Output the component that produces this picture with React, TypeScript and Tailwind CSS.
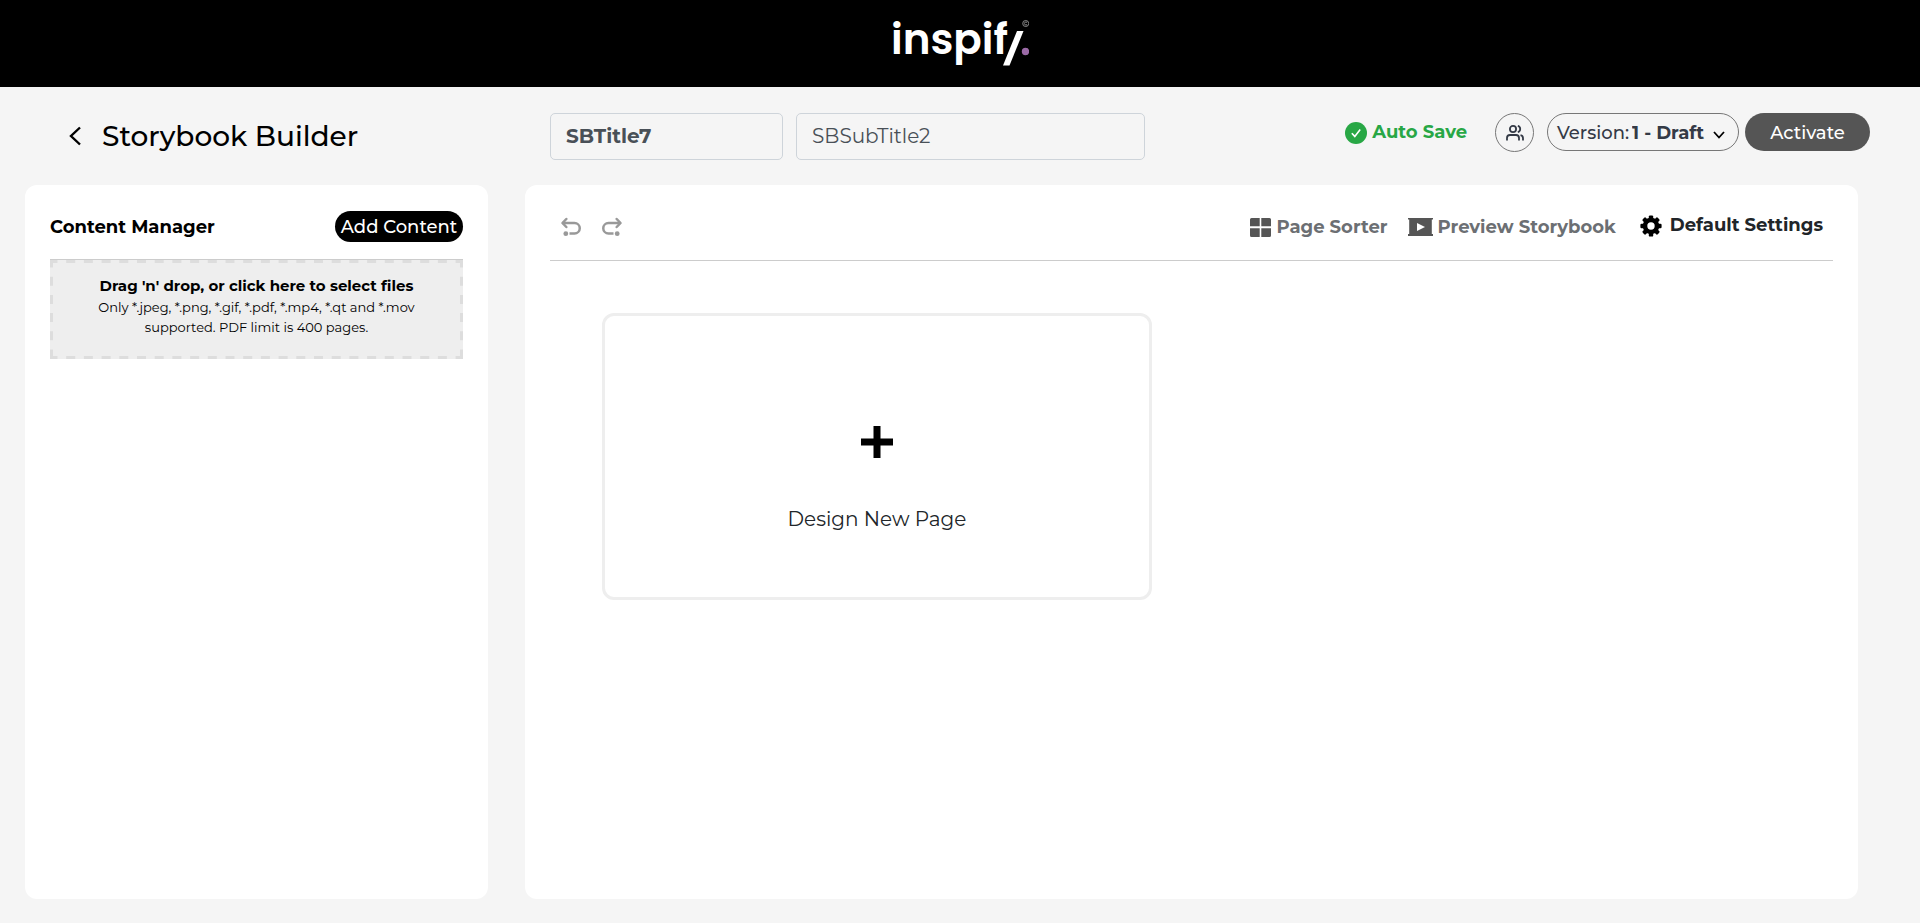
import React from "react";

function Logo() {
  return (
    <a href="#home" aria-label="inspify" className="flex h-12 items-start text-white">
      <span className="font-['Poppins','Lato',sans-serif] text-[42px] leading-[44px] font-semibold">inspif</span>
      <svg viewBox="0 0 28 48" className="-ml-[7px] h-12 w-7" aria-hidden="true">
        <path d="M16 13H22.500L8.500 47.500H2Z" fill="#fff" />
        <circle cx="24.500" cy="33.500" r="3.700" fill="#9b6aa6" />
        <circle cx="24.700" cy="5.500" r="3" fill="none" stroke="#8a8a8a" />
        <path d="M26 4.500a1.500 1.500 0 1 0 0 2" fill="none" stroke="#8a8a8a" />
      </svg>
    </a>
  );
}

function UndoIcon({ flipped = false }: { flipped?: boolean }) {
  return (
    <svg
      viewBox="0 0 20 20"
      className={flipped ? "h-5 w-5 -scale-x-100" : "h-5 w-5"}
      fill="none"
      stroke="#999"
      strokeWidth="2.500"
      aria-hidden="true"
    >
      <path d="M1.500 6H13.500a5.200 5.200 0 0 1 0 10.500H8.500" />
      <path d="M5.300 2 1.500 6l3.800 4" strokeLinecap="round" strokeLinejoin="round" />
      <circle cx="4.800" cy="16.700" r="2.400" fill="#999" stroke="none" />
    </svg>
  );
}

function Gear() {
  const teeth = [0, 45, 90, 135, 180, 225, 270, 315];
  return (
    <svg viewBox="0 0 22 22" className="h-[22px] w-[22px]" aria-hidden="true">
      <circle cx="11" cy="11" r="6" fill="none" stroke="#000" strokeWidth="4.600" />
      {teeth.map((a) => (
        <rect key={a} x="8.800" y="0.400" width="4.400" height="4" rx="1.200" transform={`rotate(${a} 11 11)`} />
      ))}
    </svg>
  );
}

function TitleBar() {
  return (
    <div className="flex items-start pt-[26px] pr-[50px] pb-[25px]">
      <div className="flex h-[47px] w-[550px] shrink-0 items-center gap-[21px] pb-0.5 pl-[69px]">
        <a href="#back" aria-label="Back">
          <svg viewBox="0 0 12 20" className="h-5 w-3" fill="none" stroke="#000" strokeWidth="2.400" aria-hidden="true">
            <path d="M11 1.500 2 10l9 8.500" />
          </svg>
        </a>
        <h1 className="text-[28px] leading-9 font-medium text-black">Storybook Builder</h1>
      </div>
      <div className="flex gap-[13px]">
        <input
          aria-label="Title"
          defaultValue="SBTitle7"
          className="h-[47px] w-[233px] rounded-[5px] border border-[#ced4da] bg-transparent px-[15px] pb-0.5 text-[20px] font-bold text-[#495057]"
        />
        <input
          aria-label="Subtitle"
          defaultValue="SBSubTitle2"
          className="h-[47px] w-[349px] rounded-[5px] border border-[#ced4da] bg-transparent px-[15px] pb-0.5 text-[20px] text-[#495057]"
        />
      </div>
      <div className="ml-auto flex items-start">
        <div className="mr-7 flex h-[39px] items-center gap-[5px] text-[18px] font-bold text-[#28a745]">
          <svg viewBox="0 0 22 22" className="h-[22px] w-[22px]" aria-hidden="true">
            <circle cx="11" cy="11" r="11" fill="#28a745" />
            <path d="m6.800 11.200 3 3.200 5.400-7" fill="none" stroke="#fff" strokeWidth="1.600" />
          </svg>
          Auto Save
        </div>
        <button
          aria-label="Collaborators"
          className="mr-[13px] flex h-[39px] w-[39px] items-center justify-center rounded-full border border-[#777]"
        >
          <svg viewBox="0 0 18 16" className="h-4 w-[18px]" fill="none" stroke="#343a46" strokeWidth="1.800" aria-hidden="true">
            <circle cx="7" cy="4" r="3.100" />
            <path d="M1 15.500V13a3 3 0 0 1 3-3h6a3 3 0 0 1 3 3v2.500M11.800.9a3.200 3.200 0 0 1 0 6.200M14.500 10.200a3 3 0 0 1 2.500 3v2.300" />
          </svg>
        </button>
        <label className="relative mr-[6px] flex h-[38px] w-[192px] items-center gap-[3px] rounded-full border border-[#777] pt-0.5 pl-[9px] text-[18px] font-medium text-[#343a46]">
          Version:
          <select className="flex-1 appearance-none bg-transparent text-[18px] font-bold outline-none">
            <option>1 - Draft</option>
          </select>
          <svg
            viewBox="0 0 12 8"
            className="pointer-events-none absolute top-[17px] right-[13px] h-2 w-3"
            fill="none"
            stroke="#000"
            strokeWidth="1.800"
            aria-hidden="true"
          >
            <path d="m1 1 5 5.500L11 1" />
          </svg>
        </label>
        <button className="h-[38px] w-[125px] rounded-full bg-[#555] pt-0.5 text-[18px] font-medium text-white">
          Activate
        </button>
      </div>
    </div>
  );
}

function DashedFrame() {
  return (
    <svg className="pointer-events-none absolute inset-0 h-full w-full" stroke="#ddd" strokeWidth="6" aria-hidden="true">
      <line x1="0" y1="0" x2="100%" y2="0" strokeDasharray="9 8.700" strokeDashoffset="1.500" />
      <line x1="0" y1="100%" x2="100%" y2="100%" strokeDasharray="9 8.700" strokeDashoffset="1.500" />
      <line x1="0" y1="0" x2="0" y2="100%" strokeDasharray="9 9.200" strokeDashoffset="1.500" />
      <line x1="100%" y1="0" x2="100%" y2="100%" strokeDasharray="9 9.200" strokeDashoffset="1.500" />
    </svg>
  );
}

function ContentManager() {
  return (
    <aside className="w-[463px] shrink-0 rounded-xl bg-white px-[25px] pt-[26px]">
      <div className="flex h-[31px] items-center justify-between">
        <h2 className="pt-0.5 text-[18px] font-bold text-black">Content Manager</h2>
        <button className="h-[31px] w-[128px] rounded-full bg-black pt-0.5 text-[18px] font-medium whitespace-nowrap text-white">
          Add Content
        </button>
      </div>
      <div className="mt-[17px] border-t border-[#ccc]">
        <label className="relative block h-[99px] cursor-pointer bg-[#eee] px-10 pt-[15px] text-center text-black">
          <DashedFrame />
          <input type="file" multiple className="sr-only" />
          <span className="block text-[15px] leading-[22px] font-bold">Drag 'n' drop, or click here to select files</span>
          <span className="block text-[13px] leading-5">
            Only *.jpeg, *.png, *.gif, *.pdf, *.mp4, *.qt and *.mov
            <br />
            supported. PDF limit is 400 pages.
          </span>
        </label>
      </div>
    </aside>
  );
}

function Workspace() {
  return (
    <main className="flex-1 rounded-xl bg-white px-[25px] pt-[20px]">
      <div className="flex h-[56px] items-center border-b border-[#ccc] pr-[10px] pb-[14px] pl-[11px]">
        <div className="flex gap-[21px] pt-0.5">
          <button aria-label="Undo">
            <UndoIcon />
          </button>
          <button aria-label="Redo">
            <UndoIcon flipped />
          </button>
        </div>
        <div className="ml-auto flex items-center text-[18px] font-bold text-[#6c6f73]">
          <button className="mr-5 flex items-center gap-[5px] pt-[3px]">
            <svg viewBox="0 0 21 19" className="h-[19px] w-[21px]" fill="#555" aria-hidden="true">
              <path d="M1.500 0H9.700V8.300H0V1.500Q0 0 1.500 0ZM11.300 0h8.200Q21 0 21 1.500V8.300H11.300ZM0 10.200H9.700V19H1.500Q0 19 0 17.500ZM11.300 10.200H21v7.300q0 1.500-1.500 1.500H11.300Z" />
            </svg>
            Page Sorter
          </button>
          <button className="mr-6 flex items-center gap-[5px] pt-[3px]">
            <svg viewBox="0 0 25 18" className="h-[18px] w-[25px]" aria-hidden="true">
              <path d="M0 0h25v1.400h-1.200V16H25v2H0v-2h1.200V1.400H0Z" fill="#555" />
              <path d="M9 5v8l8-4Z" fill="#fff" />
            </svg>
            Preview Storybook
          </button>
          <button className="flex items-center gap-2 text-[#212529]">
            <Gear />
            Default Settings
          </button>
        </div>
      </div>
      <button className="mt-[52px] ml-[52px] flex h-[287px] w-[550px] flex-col items-center rounded-xl border-3 border-[#eee] pt-[110px] text-[20px] text-[#212529]">
        <svg viewBox="0 0 32 32" className="h-8 w-8" aria-hidden="true">
          <path d="M12.500 0h7v12.500H32v7H19.500V32h-7V19.500H0v-7h12.500Z" />
        </svg>
        <span className="mt-[46px] leading-[30px]">Design New Page</span>
      </button>
    </main>
  );
}

export default function App() {
  return (
    <div className="flex min-h-screen flex-col bg-[#f5f5f5] font-['Montserrat','Inter',sans-serif]">
      <header className="flex h-[87px] justify-center bg-black pt-[18px]">
        <Logo />
      </header>
      <TitleBar />
      <div className="flex flex-1 gap-[37px] pr-[62px] pb-6 pl-[25px]">
        <ContentManager />
        <Workspace />
      </div>
    </div>
  );
}
